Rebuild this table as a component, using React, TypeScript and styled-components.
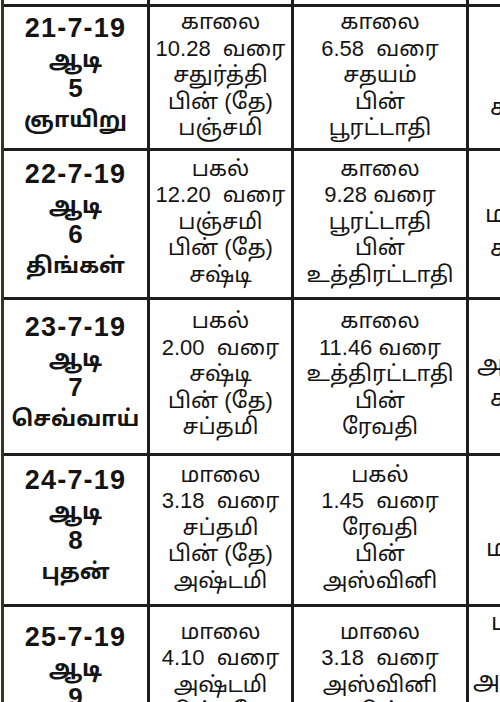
import React from "react";
import styled, { createGlobalStyle } from "styled-components";

const Global = createGlobalStyle`
  html, body { margin: 0; padding: 0; background: #ffffff; }
  body { width: 500px; height: 702px; overflow: hidden; }
  #root { width: 500px; height: 702px; overflow: hidden; }
`;

const FONT = `"Liberation Sans", "Noto Sans Tamil", "Latha", "Lohit Tamil", sans-serif`;

const Page = styled.div`
  width: 500px;
  height: 702px;
  overflow: hidden;
  background: #ffffff;
  padding-left: 1px;
  box-sizing: border-box;
`;

const Table = styled.div`
  display: grid;
  grid-template-columns: 143px 141px 172px 180px;
  grid-template-rows: 40px 141px 146px 153px 148px 160px;
  gap: 3px;
  background: #1e1e1e;
  border-left: 3px solid #3a3320;
  margin-top: -36px;
  width: max-content;
`;

const Cell = styled.div`
  background: #ffffff;
  display: flex;
  flex-direction: column;
  align-items: center;
  justify-content: center;
  overflow: hidden;
  color: #141414;
  font-family: ${FONT};
  box-sizing: border-box;
`;

const InfoCell = styled(Cell)`
  padding-bottom: 4px;
`;

const DateCell = styled(Cell)<{ $end?: boolean }>`
  justify-content: ${(p) => (p.$end ? "flex-end" : "center")};
  padding-bottom: ${(p) => (p.$end ? 0 : 3)}px;
`;

const DateText = styled.div`
  font-weight: 700;
  font-size: 27px;
  line-height: 26px;
  margin-bottom: 4px;
  letter-spacing: 1.2px;
`;

const MonthText = styled.div`
  font-weight: 700;
  font-size: 23px;
  line-height: 28px;
  margin-bottom: 3px;
`;

const DayNum = styled.div`
  font-weight: 700;
  font-size: 26px;
  line-height: 24px;
  margin-bottom: 2px;
`;

const WeekDay = styled.div`
  font-weight: 700;
  font-size: 22px;
  line-height: 36px;
`;

const InfoLine = styled.div`
  font-size: 22px;
  line-height: 26.5px;
  white-space: pre;
  text-align: center;
`;

const SideCell = styled(Cell)<{ $pad: number }>`
  align-items: flex-start;
  justify-content: flex-start;
  padding-top: ${(p) => p.$pad}px;
`;

const SideLine = styled.div<{ $gap: number; $indent: number }>`
  font-size: 24px;
  line-height: 26px;
  margin-bottom: ${(p) => p.$gap}px;
  padding-left: ${(p) => p.$indent}px;
  white-space: pre;
`;

type SideText = { t: string; gap: number; indent: number };

type Row = {
  date: string;
  day: string;
  week: string;
  thithi: string[];
  star: string[];
  side: { pad: number; lines: SideText[] };
};

const rows: Row[] = [
  {
    date: "21-7-19",
    day: "5",
    week: "ஞாயிறு",
    thithi: ["காலை", "10.28  வரை", "சதுர்த்தி", "பின் (தே)", "பஞ்சமி"],
    star: ["காலை", "6.58  வரை", "சதயம்", "பின்", "பூரட்டாதி"],
    side: { pad: 87, lines: [{ t: "கடகம்", gap: 0, indent: 21 }] },
  },
  {
    date: "22-7-19",
    day: "6",
    week: "திங்கள்",
    thithi: ["பகல்", "12.20  வரை", "பஞ்சமி", "பின் (தே)", "சஷ்டி"],
    star: ["காலை", "9.28 வரை", "பூரட்டாதி", "பின்", "உத்திரட்டாதி"],
    side: {
      pad: 50,
      lines: [
        { t: "மகம்", gap: 8, indent: 16 },
        { t: "கடகம்", gap: 0, indent: 21 },
      ],
    },
  },
  {
    date: "23-7-19",
    day: "7",
    week: "செவ்வாய்",
    thithi: ["பகல்", "2.00  வரை", "சஷ்டி", "பின் (தே)", "சப்தமி"],
    star: ["காலை", "11.46 வரை", "உத்திரட்டாதி", "பின்", "ரேவதி"],
    side: {
      pad: 51,
      lines: [
        { t: "அமிர்த", gap: 8, indent: 8 },
        { t: "கடகம்", gap: 0, indent: 21 },
      ],
    },
  },
  {
    date: "24-7-19",
    day: "8",
    week: "புதன்",
    thithi: ["மாலை", "3.18  வரை", "சப்தமி", "பின் (தே)", "அஷ்டமி"],
    star: ["பகல்", "1.45  வரை", "ரேவதி", "பின்", "அஸ்வினி"],
    side: { pad: 79, lines: [{ t: "மகம்", gap: 0, indent: 17 }] },
  },
  {
    date: "25-7-19",
    day: "9",
    week: "வியாழன்",
    thithi: ["மாலை", "4.10  வரை", "அஷ்டமி", "பின் (தே)", "நவமி"],
    star: ["மாலை", "3.18  வரை", "அஸ்வினி", "பின்", "பரணி"],
    side: {
      pad: 2,
      lines: [
        { t: "பகல்", gap: 32, indent: 22 },
        { t: "அமிர்த", gap: 0, indent: 4 },
      ],
    },
  },
];

export default function App() {
  return (
    <Page>
      <Global />
      <Table>
        <DateCell $end>
          <WeekDay>சனி</WeekDay>
        </DateCell>
        <Cell />
        <Cell />
        <Cell />
        {rows.map((r) => (
          <React.Fragment key={r.date}>
            <DateCell>
              <DateText>{r.date}</DateText>
              <MonthText>ஆடி</MonthText>
              <DayNum>{r.day}</DayNum>
              <WeekDay>{r.week}</WeekDay>
            </DateCell>
            <InfoCell>
              {r.thithi.map((l, i) => (
                <InfoLine key={i}>{l}</InfoLine>
              ))}
            </InfoCell>
            <InfoCell>
              {r.star.map((l, i) => (
                <InfoLine key={i}>{l}</InfoLine>
              ))}
            </InfoCell>
            <SideCell $pad={r.side.pad}>
              {r.side.lines.map((l, i) => (
                <SideLine key={i} $gap={l.gap} $indent={l.indent}>
                  {l.t}
                </SideLine>
              ))}
            </SideCell>
          </React.Fragment>
        ))}
      </Table>
    </Page>
  );
}
